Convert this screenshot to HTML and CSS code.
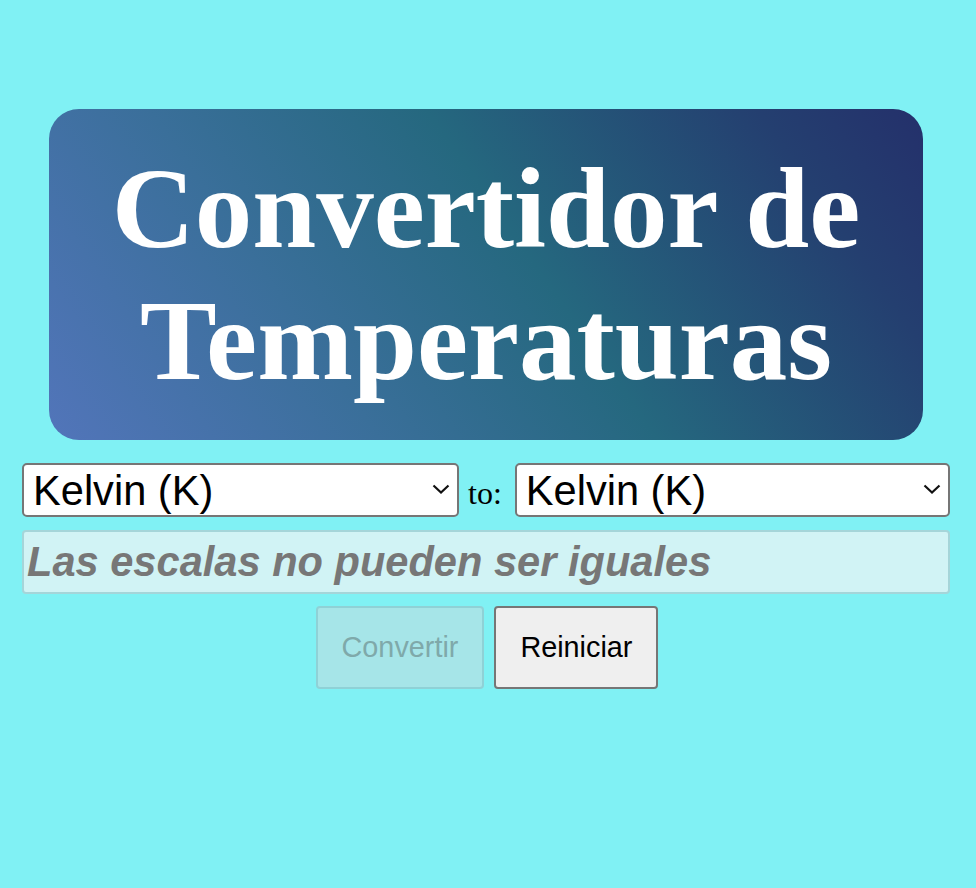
FILE: index.html
```html
<!DOCTYPE html>
<html lang="es">
<head>
<meta charset="utf-8">
<title>Convertidor de Temperaturas</title>
<link rel="stylesheet" href="styles.css">
</head>
<body>
<main class="app">
  <header class="banner">
    <h1 class="title">Convertidor de Temperaturas</h1>
  </header>
  <div class="scales">
    <div class="select-wrap select-from">
      <select class="scale">
        <option>Celsius (°C)</option>
        <option>Fahrenheit (°F)</option>
        <option selected>Kelvin (K)</option>
      </select>
      <svg class="chevron" width="18" height="10" viewBox="0 0 18 10" aria-hidden="true"><path d="M1.5 1.5 L9 8.5 L16.5 1.5" fill="none" stroke="#111" stroke-width="2.2"/></svg>
    </div>
    <span class="to">to:</span>
    <div class="select-wrap select-to">
      <select class="scale">
        <option>Celsius (°C)</option>
        <option>Fahrenheit (°F)</option>
        <option selected>Kelvin (K)</option>
      </select>
      <svg class="chevron" width="18" height="10" viewBox="0 0 18 10" aria-hidden="true"><path d="M1.5 1.5 L9 8.5 L16.5 1.5" fill="none" stroke="#111" stroke-width="2.2"/></svg>
    </div>
  </div>
  <div class="message">Las escalas no pueden ser iguales</div>
  <div class="actions">
    <button class="btn btn-convert" disabled>Convertir</button>
    <button class="btn btn-reset">Reiniciar</button>
  </div>
</main>
</body>
</html>
```

FILE: styles.css
```css
html, body {
  margin: 0;
  padding: 0;
}
body {
  background: #80f1f4;
  font-family: "Liberation Serif", "Times New Roman", serif;
}
.app {
  width: 928px;
  margin: 0 0 0 22px;
  padding-top: 109px;
}
.banner {
  margin: 0 27px;
  height: 331px;
  box-sizing: border-box;
  border-radius: 30px;
  background: linear-gradient(55deg, #5275ba 0%, #3a6f9a 30%, #25687f 55%, #243f70 85%, #24306b 100%);
  display: flex;
  align-items: center;
  justify-content: center;
}
.title {
  margin: 0;
  color: #ffffff;
  font-family: "Liberation Serif", "Times New Roman", serif;
  font-weight: bold;
  font-size: 115px;
  line-height: normal;
  text-align: center;
}
.scales {
  margin-top: 23px;
  display: flex;
  align-items: center;
}
.select-wrap {
  position: relative;
  min-width: 0;
}
.select-from {
  flex: 0 0 437px;
}
.select-to {
  flex: 1;
}
.scale {
  display: block;
  width: 100%;
  height: 54px;
  -webkit-appearance: none;
  appearance: none;
  padding: 0 40px 0 9px;
  font-family: "Liberation Sans", Arial, sans-serif;
  font-size: 41.6px;
  color: #000;
  background: #fff;
  border: 2px solid #767676;
  border-radius: 5px;
}
.chevron {
  position: absolute;
  right: 9px;
  top: 21px;
  pointer-events: none;
}
.to {
  font-family: "Liberation Serif", "Times New Roman", serif;
  font-size: 32px;
  color: #000;
  padding-top: 6px;
  margin: 0 13px 0 9px;
}
.message {
  margin-top: 13px;
  height: 64px;
  box-sizing: border-box;
  padding: 6px 3px;
  background: #d1f3f5;
  border: 2px solid #a5d5d9;
  border-radius: 4px;
  font-family: "Liberation Sans", Arial, sans-serif;
  font-size: 41.6px;
  font-weight: bold;
  font-style: italic;
  color: #777777;
  line-height: 48px;
}
.actions {
  margin-top: 12px;
  display: flex;
  justify-content: center;
  gap: 10px;
  padding-left: 2px;
}
.btn {
  font-family: "Liberation Sans", Arial, sans-serif;
  font-size: 28.8px;
  height: 83px;
  padding: 0 24px;
  border-radius: 4px;
}
.btn-convert {
  background: #a6e5e8;
  border: 2px solid #8fd1d6;
  color: #7fa9aa;
}
.btn-reset {
  background: #efefef;
  border: 2px solid #767676;
  color: #000;
}
```
